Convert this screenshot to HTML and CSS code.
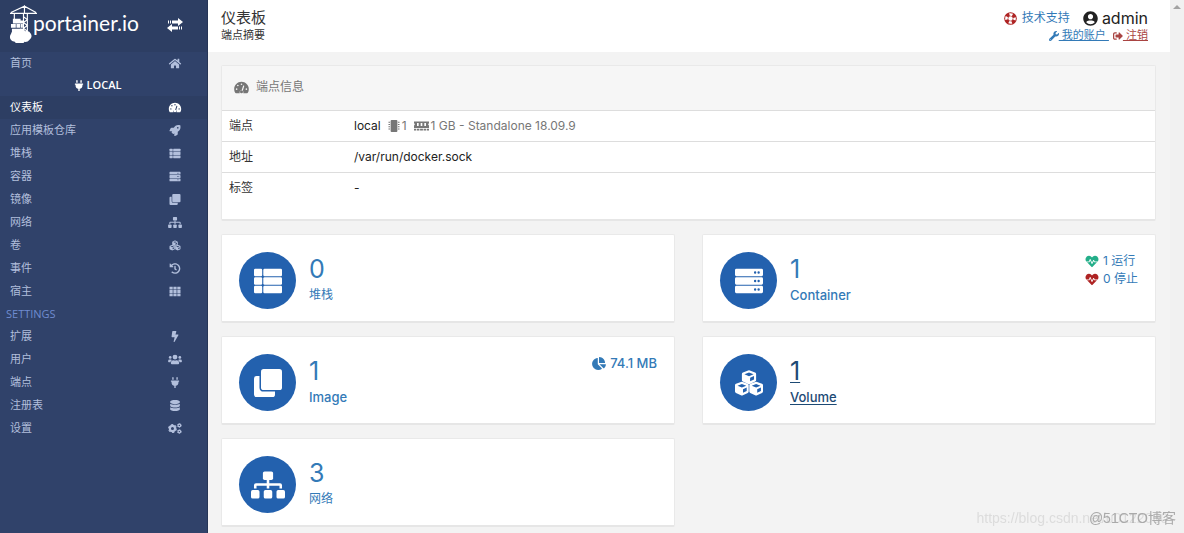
FILE: index.html
```html
<!DOCTYPE html>
<html lang="zh-CN">
<head>
<meta charset="utf-8">
<title>Portainer</title>
<link rel="stylesheet" href="styles.css">
</head>
<body>
<svg class="sprite" aria-hidden="true">
  <symbol id="home" viewBox="0 0 576 512"><path d="M280.37 148.26L96 300.11V464a16 16 0 0 0 16 16l112.06-.29a16 16 0 0 0 15.92-16V368a16 16 0 0 1 16-16h64a16 16 0 0 1 16 16v95.64a16 16 0 0 0 16 16.05L464 480a16 16 0 0 0 16-16V300L295.67 148.26a12.19 12.19 0 0 0-15.3 0zM571.6 251.47L488 182.56V44.05a12 12 0 0 0-12-12h-56a12 12 0 0 0-12 12v72.61L318.47 43a48 48 0 0 0-61 0L4.34 251.47a12 12 0 0 0-1.6 16.9l25.5 31A12 12 0 0 0 45.15 301l235.22-193.74a12.19 12.19 0 0 1 15.3 0L530.9 301a12 12 0 0 0 16.9-1.6l25.5-31a12 12 0 0 0-1.7-16.93z"/></symbol>
  <symbol id="plug" viewBox="0 0 384 512"><path d="M320 32a32 32 0 0 0-64 0v96h64Zm48 128H16A16 16 0 0 0 0 176v32a16 16 0 0 0 16 16H32v32A160 160 0 0 0 160 412.800V512h64V412.800A160 160 0 0 0 352 256V224h16a16 16 0 0 0 16-16V176A16 16 0 0 0 368 160ZM128 32a32 32 0 0 0-64 0v96h64Z"/></symbol>
  <symbol id="gauge" viewBox="0 0 576 512"><path fill-rule="evenodd" d="M288 32C129 32 0 161 0 320c0 53 14 102 39 145 6 9 16 15 28 15h154c-10-22-10-50 2-72 14-26 40-41 70-41l56-171c4-13 17-20 30-16s20 17 16 30l-56 171c25 23 32 63 17 99h154c11 0 21-6 27-15 25-43 39-92 39-145C576 161 447 32 288 32zM288 96a32 32 0 1 0 0 64 32 32 0 1 0 0-64zM96 288a32 32 0 1 0 0 64 32 32 0 1 0 0-64zM144 144a32 32 0 1 0 0 64 32 32 0 1 0 0-64zM480 288a32 32 0 1 0 0 64 32 32 0 1 0 0-64z"/><circle cx="288" cy="420" r="60"/></symbol>
  <symbol id="rocket" viewBox="0 0 512 512"><path fill-rule="evenodd" d="M505 19c-1-5-7-11-12-12C461 0 435 0 410 0 307 0 245 55 199 128H95c-16 0-36 12-43 26L3 253c-2 4-3 7-3 11a24 24 0 0 0 24 24h104l-23 22c-11 12-13 33 0 46l51 51c11 11 32 13 45 0l23-23v104a24 24 0 0 0 24 24c3 0 7-1 11-3l98-49c15-7 27-26 27-43V313c72-47 128-109 128-211 0-26 0-51-7-83zM384 168a40 40 0 1 1 40-40 40 40 0 0 1-40 40z"/></symbol>
  <symbol id="list" viewBox="0 0 512 512"><rect y="32" width="150" height="136" rx="22"/><rect x="170" y="32" width="342" height="136" rx="22"/><rect y="188" width="150" height="136" rx="22"/><rect x="170" y="188" width="342" height="136" rx="22"/><rect y="344" width="150" height="136" rx="22"/><rect x="170" y="344" width="342" height="136" rx="22"/></symbol>
  <symbol id="server" viewBox="0 0 512 512"><path fill-rule="evenodd" d="M26 32h460q26 0 26 26v84q0 26-26 26H26q-26 0-26-26V58q0-26 26-26zM26 188h460q26 0 26 26v84q0 26-26 26H26q-26 0-26-26v-84q0-26 26-26zM26 344h460q26 0 26 26v84q0 26-26 26H26q-26 0-26-26v-84q0-26 26-26zM368 78a22 22 0 1 0 0 44 22 22 0 1 0 0-44zM432 78a22 22 0 1 0 0 44 22 22 0 1 0 0-44zM368 234a22 22 0 1 0 0 44 22 22 0 1 0 0-44zM432 234a22 22 0 1 0 0 44 22 22 0 1 0 0-44zM368 390a22 22 0 1 0 0 44 22 22 0 1 0 0-44zM432 390a22 22 0 1 0 0 44 22 22 0 1 0 0-44z"/></symbol>
  <symbol id="clone" viewBox="0 0 512 512"><rect x="128" width="384" height="384" rx="48"/><path d="M48 128h52v208q0 76 76 76h208v52q0 48-48 48H48q-48 0-48-48V176q0-48 48-48z"/></symbol>
  <symbol id="sitemap" viewBox="0 0 640 512"><rect y="352" width="160" height="160" rx="32"/><rect x="240" y="352" width="160" height="160" rx="32"/><rect x="480" y="352" width="160" height="160" rx="32"/><rect x="224" width="192" height="160" rx="32"/><path d="M296 160h48v64h202q38 0 38 38v58h-48v-48H344v48h-48v-48H104v48H56v-58q0-38 38-38h202z"/></symbol>
  <symbol id="cubes" viewBox="0 0 512 512"><path fill-rule="evenodd" d="M256 24q8 0 16 4l94 36q20 8 20 28v112q0 18-18 26l-94 42q-18 8-36 0l-94-42q-18-8-18-26V92q0-20 20-28l94-36q8-4 16-4zM256 66l-84 32 84 34 84-34zM276 226l72-34v-62l-72 30z"/><path fill-rule="evenodd" d="M126 232q8 0 16 4l90 34q18 8 18 28v114q0 18-16 26l-90 42q-18 8-36 0l-90-42Q0 430 0 412V298q0-20 18-28l90-34q10-4 18-4zM126 274l-80 31 80 33 80-33zM146 434l68-33v-61l-68 29zM386 232q8 0 18 4l90 34q18 8 18 28v114q0 18-18 26l-90 42q-18 8-36 0l-90-42q-16-8-16-26V298q0-20 18-28l90-34q8-4 16-4zM386 274l-80 31 80 33 80-33zM406 434l68-33v-61l-68 29z"/></symbol>
  <symbol id="history" viewBox="0 0 512 512"><path d="M504 256c0 137-111 248-248 248-59 0-113-20-156-55-11-9-12-26-2-36l12-11c8-8 22-9 31-2 32 25 72 40 115 40 102 0 184-82 184-184S358 72 256 72c-49 0-93 19-126 50l51 51c10 10 3 27-12 27H24q-16 0-16-16V39c0-15 17-22 27-12l50 50C129 34 190 8 256 8c137 0 248 111 248 248zM323 334l10-12c8-11 6-26-4-34l-41-32V152q0-24-24-24h-16q-24 0-24 24v136l65 50c11 9 26 7 34-4z"/></symbol>
  <symbol id="grid" viewBox="0 0 512 512"><path d="M0 32h150v136H0zM181 32h150v136H181zM362 32h150v136H362zM0 188h150v136H0zM181 188h150v136H181zM362 188h150v136H362zM0 344h150v136H0zM181 344h150v136H181zM362 344h150v136H362z"/></symbol>
  <symbol id="bolt" viewBox="0 0 320 512"><path d="M296 160H181l42-130C227 15 216 0 200 0H56C44 0 34 9 32 21L0 261c-2 14 10 27 24 27h119L97 483c-4 15 8 29 23 29 8 0 16-4 21-12l176-304c9-16-2-36-21-36z"/></symbol>
  <symbol id="users" viewBox="0 0 640 512"><circle cx="96" cy="160" r="64"/><circle cx="544" cy="160" r="64"/><circle cx="320" cy="144" r="112"/><path d="M64 256h64q26 0 45 19-54 30-64 109H32q-32 0-32-32v-32q0-64 64-64zM576 256h-64q-26 0-45 19 54 30 64 109h77q32 0 32-32v-32q0-64-64-64zM243 288h8q69 32 138 0h8q115 0 115 115v29q0 48-48 48H176q-48 0-48-48v-29q0-115 115-115z"/></symbol>
  <symbol id="database" viewBox="0 0 448 512"><path d="M448 73v46c0 40-100 73-224 73S0 159 0 119V73C0 33 100 0 224 0s224 33 224 73zM448 176v103c0 40-100 73-224 73S0 319 0 279V176c48 33 136 49 224 49s176-16 224-49zM448 336v103c0 40-100 73-224 73S0 479 0 439V336c48 33 136 49 224 49s176-16 224-49z"/></symbol>
  <symbol id="cogs" viewBox="0 0 640 512"><g fill="none" stroke="currentColor"><circle cx="202" cy="256" r="120" stroke-width="100"/><circle cx="202" cy="256" r="180" stroke-width="50" stroke-dasharray="110 78.500"/><circle cx="522" cy="112" r="60" stroke-width="54"/><circle cx="522" cy="112" r="92" stroke-width="34" stroke-dasharray="56 40"/><circle cx="522" cy="400" r="60" stroke-width="54"/><circle cx="522" cy="400" r="92" stroke-width="34" stroke-dasharray="56 40"/></g></symbol>
  <symbol id="ring" viewBox="0 0 512 512"><circle cx="256" cy="256" r="248"/><circle cx="256" cy="256" r="160" fill="none" stroke="#fff" stroke-width="100" stroke-dasharray="126 125.300" stroke-dashoffset="63"/><circle cx="256" cy="256" r="88" fill="#fff"/></symbol>
  <symbol id="user" viewBox="0 0 496 512"><path d="M248 8C111 8 0 119 0 256s111 248 248 248 248-111 248-248S385 8 248 8zm0 96c49 0 88 39 88 88s-39 88-88 88-88-39-88-88 39-88 88-88zm0 344c-59 0-111-27-146-68 18-36 55-60 98-60 2 0 5 0 7 1 13 4 27 7 41 7s28-3 41-7c2-1 5-1 7-1 43 0 80 24 98 60-35 41-87 68-146 68z"/></symbol>
  <symbol id="wrench" viewBox="0 0 512 512"><path d="M508 109c-3-9-14-12-20-5l-75 74-68-11-11-68 74-75c7-6 4-17-5-20-48-11-100 1-137 38-39 40-50 97-34 147L19 403c-25 25-25 65 0 90s65 25 90 0l213-213c51 17 108 6 148-34 37-37 50-90 38-137zM64 472a24 24 0 1 1 0-48 24 24 0 0 1 0 48z"/></symbol>
  <symbol id="exit" viewBox="0 0 512 512"><path d="M497 273L329 441c-15 15-41 4-41-17v-96H152q-24 0-24-24v-96q0-24 24-24h136V88c0-21 26-32 41-17l168 168c9 9 9 25 0 34zM192 436v-40q0-12-12-12H96q-32 0-32-32V160q0-32 32-32h84q12 0 12-12V76q0-12-12-12H96c-53 0-96 43-96 96v192c0 53 43 96 96 96h84q12 0 12-12z"/></symbol>
  <symbol id="heart" viewBox="0 0 512 512"><path d="M320 244l-50 99c-6 12-23 12-28 0l-57-127-30 72H61l182 187c7 7 19 7 26 0l182-187H342zM474 74l-3-3c-51-52-135-52-187 0l-28 29-28-29c-51-52-136-52-187 0l-3 3C-10 124-12 203 31 256h102l36-86c6-13 24-13 30-1l58 130 49-98c6-11 22-11 28 0l28 55h119c43-53 41-132-7-182z"/></symbol>
  <symbol id="pie" viewBox="0 0 544 512"><path d="M528 288H291l158 158c6 6 16 7 22 1 39-37 65-86 73-141 1-10-7-18-16-18zM512 223C504 104 408 8 289 0c-9-1-17 7-17 16v224h224c9 0 17-8 16-17zM224 288V51c0-10-8-18-18-16C87 51-4 156 0 280c5 129 115 234 243 232 50-1 97-17 135-44 8-6 9-17 2-24z"/></symbol>
  <symbol id="chip" viewBox="0 0 512 512"><rect x="112" width="288" height="512" rx="40"/><path d="M20 72h68v44H20zM20 168h68v44H20zM20 264h68v44H20zM20 360h68v44H20zM424 72h68v44h-68zM424 168h68v44h-68zM424 264h68v44h-68zM424 360h68v44h-68z"/></symbol>
  <symbol id="memory" viewBox="0 0 640 512"><path fill-rule="evenodd" d="M0 64h640v70q-34 12-34 52t34 52v98H0v-98q34-12 34-52T0 134zM128 128v128h72V128zM284 128v128h72V128zM440 128v128h72V128zM0 368h90v80H0zM120 368h110v80H120zM260 368h120v80H260zM410 368h110v80H410zM550 368h90v80h-90z"/></symbol>
</svg>

<div class="app">
  <nav class="sidebar">
    <div class="brand">
      <a class="logo" href="#">
        <svg class="crane" viewBox="0 0 28 40" aria-hidden="true">
          <g fill="none" stroke="#fff" stroke-width="1.200"><path d="M0 9.500h28M1 8.500L15 2l12 6.500M15 1v9"/><path d="M14 9v24M18 9v24M14 13l4 3-4 3 4 3-4 3 4 3-4 3M4.500 10v6"/></g>
          <path d="M3 15h8v2h3v3H3zM1 20.500h5v4H1zM6.700 20.500h4v4h-4zM11.300 20.500h2v4h-2zM2 25.500h12v5H2z" fill="#fff"/>
          <path d="M5 39a5 5 0 0 1-4-8 5 5 0 0 1 6-4 6 6 0 0 1 9 1 5 5 0 0 1 4 9 5 5 0 0 1-5 2 6 6 0 0 1-10 0z" fill="#fff"/>
        </svg>
        <span>portainer.io</span>
      </a>
      <button class="toggle" type="button" aria-label="Toggle sidebar">
        <svg viewBox="0 0 16 14"><path d="M1 2.500h1v3H1zM3 2.500h1v3H3zM5 2.500h6V0l5 4-5 4V5.500H5zM11 8.500H5V6L0 10l5 4v-2.500h6zM12 8.500h1v3h-1zM14 8.500h1v3h-1z"/></svg>
      </button>
    </div>
    <ul class="menu">
      <li><a href="#">首页<svg><use href="#home"/></svg></a></li>
      <li class="endpoint"><svg><use href="#plug"/></svg>LOCAL</li>
      <li><a class="active" href="#">仪表板<svg><use href="#gauge"/></svg></a></li>
      <li><a href="#">应用模板仓库<svg><use href="#rocket"/></svg></a></li>
      <li><a href="#">堆栈<svg><use href="#list"/></svg></a></li>
      <li><a href="#">容器<svg><use href="#server"/></svg></a></li>
      <li><a href="#">镜像<svg><use href="#clone"/></svg></a></li>
      <li><a href="#">网络<svg><use href="#sitemap"/></svg></a></li>
      <li><a href="#">卷<svg><use href="#cubes"/></svg></a></li>
      <li><a href="#">事件<svg><use href="#history"/></svg></a></li>
      <li><a href="#">宿主<svg><use href="#grid"/></svg></a></li>
      <li class="section">SETTINGS</li>
      <li><a href="#">扩展<svg><use href="#bolt"/></svg></a></li>
      <li><a href="#">用户<svg><use href="#users"/></svg></a></li>
      <li><a href="#">端点<svg><use href="#plug"/></svg></a></li>
      <li><a href="#">注册表<svg><use href="#database"/></svg></a></li>
      <li><a href="#">设置<svg><use href="#cogs"/></svg></a></li>
    </ul>
  </nav>

  <main class="page">
    <header class="topbar">
      <div>
        <h1>仪表板</h1>
        <p class="subtitle">端点摘要</p>
      </div>
      <div class="account">
        <div class="account-row">
          <a class="support" href="#"><svg><use href="#ring"/></svg>技术支持</a>
          <span class="user"><svg><use href="#user"/></svg>admin</span>
        </div>
        <div class="account-links">
          <a href="#"><svg><use href="#wrench"/></svg><u>&nbsp;我的账户&nbsp;</u></a>
          <a class="logout" href="#"><svg><use href="#exit"/></svg><u>&nbsp;注销</u></a>
        </div>
      </div>
    </header>

    <div class="content">
      <section class="panel">
        <h2><svg><use href="#gauge"/></svg>端点信息</h2>
        <table>
          <tr><th scope="row">端点</th><td><span class="specs">local <span class="muted"><svg><use href="#chip"/></svg>1</span> <span class="muted"><svg class="mem"><use href="#memory"/></svg>1 GB - Standalone 18.09.9</span></span></td></tr>
          <tr><th scope="row">地址</th><td>/var/run/docker.sock</td></tr>
          <tr><th scope="row">标签</th><td>-</td></tr>
        </table>
      </section>

      <div class="cards">
        <a class="card" href="#"><span class="disc"><svg><use href="#list"/></svg></span><span class="text"><span class="count">0</span><span class="label">堆栈</span></span></a>
        <a class="card" href="#"><span class="disc"><svg><use href="#server"/></svg></span><span class="text"><span class="count">1</span><span class="label latin">Container</span></span>
          <span class="status"><span><svg class="green"><use href="#heart"/></svg>1 运行</span><span><svg class="red"><use href="#heart"/></svg>0 停止</span></span></a>
        <a class="card" href="#"><span class="disc"><svg><use href="#clone"/></svg></span><span class="text"><span class="count">1</span><span class="label latin">Image</span></span>
          <span class="status latin"><span><svg><use href="#pie"/></svg>74.1 MB</span></span></a>
        <a class="card hovered" href="#"><span class="disc"><svg><use href="#cubes"/></svg></span><span class="text"><span class="count">1</span><span class="label latin">Volume</span></span></a>
        <a class="card" href="#"><span class="disc"><svg class="wide"><use href="#sitemap"/></svg></span><span class="text"><span class="count">3</span><span class="label">网络</span></span></a>
      </div>
    </div>
  </main>
  <div class="scroll-track"><svg viewBox="0 0 8 4"><path d="M0 4l4-4 4 4z"/></svg></div>
</div>
<div class="watermark url">https://blog.csdn.net/u0122030</div>
<div class="watermark site">@51CTO博客</div>
</body>
</html>
```
FILE: styles.css
```css
* { box-sizing: border-box; }
body {
  margin: 0;
  font-family: Inter, "Noto Sans CJK SC", sans-serif;
  font-size: 12px;
  line-height: 18px;
  color: #333;
  background: #f3f3f3;
}
svg { fill: currentColor; flex: none; }
a { color: #337ab7; text-decoration: none; }
h1, h2, p, ul { margin: 0; padding: 0; font-weight: 400; }
.sprite { position: absolute; width: 0; height: 0; }

.app { display: flex; height: 100vh; overflow: hidden; }

.sidebar { flex: 0 0 208px; background: #30426a; border-right: 1px solid #263556; }
.brand {
  display: flex;
  align-items: center;
  justify-content: space-between;
  height: 52px;
  padding: 0 24px 6px 10px;
  background: #2d3e63;
}
.logo { display: flex; align-items: center; color: #fff; font-family: Lato, sans-serif; font-size: 21px; }
.crane { width: 27px; height: 39px; margin-right: -4px; }
.toggle { display: flex; padding: 4px 0 0; border: 0; background: none; color: #fff; }
.toggle svg { width: 16px; height: 14px; }

.menu { list-style: none; font-size: 11px; line-height: 23px; color: #fff; }
.menu a { display: flex; align-items: center; justify-content: space-between; padding: 0 24px 0 10px; color: #b2bfdc; }
.menu a svg { width: 16px; height: 11px; }
.menu a.active { background: #2d3e63; color: #fff; }
.menu .endpoint, .menu .section { line-height: 22px; font-family: "Open Sans", sans-serif; }
.menu li:first-child a { line-height: 22px; }
.endpoint { display: flex; align-items: center; justify-content: center; gap: 3px; padding-right: 12px; font-weight: 600; }
.endpoint svg { width: 10px; height: 11px; }
.section { padding-left: 6px; color: #6f8cd0; }

.page { flex: 1; min-width: 0; }
.topbar { display: flex; justify-content: space-between; height: 52px; padding: 8px 22px 0 13px; background: #fff; }
h1 { font-size: 15px; line-height: 20px; }
.subtitle { font-size: 11px; line-height: 15px; }
.account { display: flex; flex-direction: column; align-items: flex-end; }
.account-row, .account-links { display: flex; align-items: center; }
.account-row { gap: 13px; line-height: 20px; }
.account-links { gap: 4px; font-size: 11px; line-height: 15px; }
.account-links a { display: flex; align-items: center; }
.account-links svg { width: 10px; height: 10px; }
.support, .user { display: flex; align-items: center; gap: 5px; }
.support svg { width: 13px; height: 13px; color: #ae2323; }
.user { gap: 4px; font-size: 16px; color: #222; }
.user svg { width: 15px; height: 15px; }
.account-links .logout { color: #a94442; }

.content { padding: 13px 14px 0 13px; }
.panel { border: 1px solid #e9e9e9; border-bottom: 2px solid #e6e6e6; border-radius: 2px; background: #fff; }
.panel h2 {
  display: flex;
  align-items: center;
  gap: 7px;
  height: 45px;
  padding: 0 12px 2px;
  border-bottom: 1px solid #ddd;
  background: #f6f6f6;
  font-size: 12px;
  color: #767676;
}
.panel h2 svg { width: 15px; height: 13px; }
table { width: 100%; margin-bottom: 16px; border-collapse: collapse; }
th, td { height: 31px; padding: 0 7px; border-top: 1px solid #ddd; text-align: left; font-weight: 400; }
tr:first-child > * { height: 30px; border-top: 0; }
th { width: 125px; }
td { color: #222; }
.specs { display: flex; align-items: center; gap: 7px; }
.muted { display: flex; align-items: center; gap: 2px; color: #777; }
.muted svg { width: 12px; height: 12px; }
.muted .mem { width: 15px; }

.cards { display: grid; grid-template-columns: 1fr 1fr; gap: 13px 27px; margin-top: 13px; }
.card {
  display: flex;
  align-items: flex-start;
  height: 89px;
  padding: 17px;
  border: 1px solid #e9e9e9;
  border-bottom: 2px solid #e6e6e6;
  border-radius: 2px;
  background: #fff;
}
.disc { display: flex; align-items: center; justify-content: center; width: 57px; height: 57px; border-radius: 50%; background: #2361ae; color: #fff; }
.disc svg { width: 28px; height: 28px; }
.disc .wide { width: 34px; }
.text { display: flex; flex-direction: column; margin-left: 13px; }
.count { font-size: 25px; line-height: 34px; }
.latin { font-size: 13px; font-weight: 500; }
.hovered { color: #1d4a74; }
.hovered .label, .hovered .count { text-decoration: underline 1px; text-underline-offset: 2px; }
.status { margin-left: auto; }
.status > span { display: flex; align-items: center; gap: 4px; }
.status svg { width: 14px; height: 13px; }
.green { color: #23ae89; }
.red { color: #ae2323; }

.scroll-track { flex: 0 0 14px; padding: 5px 3px; background: #f1f1f1; }
.scroll-track svg { display: block; width: 8px; height: 4px; color: #a3a3a3; }

.watermark { position: fixed; bottom: 6px; }
.url { right: 16px; font: 14px/18px "Liberation Sans", sans-serif; color: #dcdcdc; }
.site { right: 8px; font: 14px/18px "Liberation Sans", "Noto Sans CJK SC", sans-serif; color: #aaa; }
```
